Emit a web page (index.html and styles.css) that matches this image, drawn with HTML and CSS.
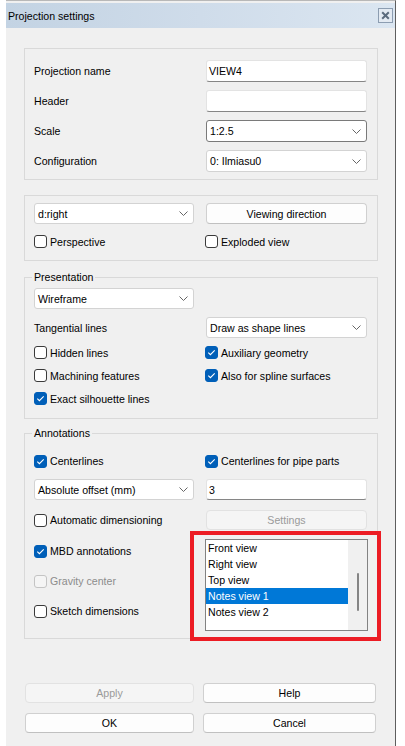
FILE: index.html
```html
<!DOCTYPE html>
<html>
<head>
<meta charset="utf-8">
<title>Projection settings</title>
<link rel="stylesheet" href="styles.css">
</head>
<body>
<div class="win">
  <div class="titlebar">
    <span class="title">Projection settings</span>
    <span class="close"><svg width="9" height="9" viewBox="0 0 9 9"><path d="M1.2 1.2L7.8 7.8M7.8 1.2L1.2 7.8" stroke="#5b6b7d" stroke-width="2"/></svg></span>
  </div>
  <div class="body">
    <div class="grp g1">
      <div class="row r22"><span>Projection name</span><div class="field tb">VIEW4</div></div>
      <div class="row r22"><span>Header</span><div class="field tb"></div></div>
      <div class="row r22"><span>Scale</span><div class="field combo focus"><span>1:2.5</span><svg class="chev" width="9" height="5" viewBox="0 0 9 5"><path d="M0.5 0.5L4.5 4.5L8.5 0.5" fill="none" stroke="#666"/></svg></div></div>
      <div class="row r22"><span>Configuration</span><div class="field combo"><span>0: Ilmiasu0</span><svg class="chev" width="9" height="5" viewBox="0 0 9 5"><path d="M0.5 0.5L4.5 4.5L8.5 0.5" fill="none" stroke="#666"/></svg></div></div>
    </div>

    <div class="grp g2">
      <div class="row r21">
        <div class="field combo"><span>d:right</span><svg class="chev" width="9" height="5" viewBox="0 0 9 5"><path d="M0.5 0.5L4.5 4.5L8.5 0.5" fill="none" stroke="#666"/></svg></div>
        <div class="btn">Viewing direction</div>
      </div>
      <div class="row r23 mt6">
        <label class="cb"><span class="box"></span>Perspective</label>
        <label class="cb rc"><span class="box"></span>Exploded view</label>
      </div>
    </div>

    <div class="grp g3">
      <div class="legend">Presentation</div>
      <div class="row r21 mt4">
        <div class="field combo"><span>Wireframe</span><svg class="chev" width="9" height="5" viewBox="0 0 9 5"><path d="M0.5 0.5L4.5 4.5L8.5 0.5" fill="none" stroke="#666"/></svg></div>
      </div>
      <div class="row r21 mt8">
        <span>Tangential lines</span>
        <div class="field combo"><span>Draw as shape lines</span><svg class="chev" width="9" height="5" viewBox="0 0 9 5"><path d="M0.5 0.5L4.5 4.5L8.5 0.5" fill="none" stroke="#666"/></svg></div>
      </div>
      <div class="row r23 mt3">
        <label class="cb"><span class="box"></span>Hidden lines</label>
        <label class="cb rc"><span class="box on"><svg width="13" height="13" viewBox="0 0 13 13"><path d="M3.3 6.6L5.4 8.7L9.7 4.4" fill="none" stroke="#fff" stroke-width="1.1"/></svg></span>Auxiliary geometry</label>
      </div>
      <div class="row r23">
        <label class="cb"><span class="box"></span>Machining features</label>
        <label class="cb rc"><span class="box on"><svg width="13" height="13" viewBox="0 0 13 13"><path d="M3.3 6.6L5.4 8.7L9.7 4.4" fill="none" stroke="#fff" stroke-width="1.1"/></svg></span>Also for spline surfaces</label>
      </div>
      <div class="row r23">
        <label class="cb"><span class="box on"><svg width="13" height="13" viewBox="0 0 13 13"><path d="M3.3 6.6L5.4 8.7L9.7 4.4" fill="none" stroke="#fff" stroke-width="1.1"/></svg></span>Exact silhouette lines</label>
      </div>
    </div>

    <div class="grp g4">
      <div class="legend">Annotations</div>
      <div class="row r22 mt10">
        <label class="cb"><span class="box on"><svg width="13" height="13" viewBox="0 0 13 13"><path d="M3.3 6.6L5.4 8.7L9.7 4.4" fill="none" stroke="#fff" stroke-width="1.1"/></svg></span>Centerlines</label>
        <label class="cb rc"><span class="box on"><svg width="13" height="13" viewBox="0 0 13 13"><path d="M3.3 6.6L5.4 8.7L9.7 4.4" fill="none" stroke="#fff" stroke-width="1.1"/></svg></span>Centerlines for pipe parts</label>
      </div>
      <div class="row r21 mt7">
        <div class="field combo"><span>Absolute offset (mm)</span><svg class="chev" width="9" height="5" viewBox="0 0 9 5"><path d="M0.5 0.5L4.5 4.5L8.5 0.5" fill="none" stroke="#666"/></svg></div>
        <div class="field tb">3</div>
      </div>
      <div class="row r20 mt10">
        <label class="cb"><span class="box"></span>Automatic dimensioning</label>
        <div class="btn dis">Settings</div>
      </div>
      <div class="split">
        <div class="lcol">
          <label class="cb r30"><span class="box on"><svg width="13" height="13" viewBox="0 0 13 13"><path d="M3.3 6.6L5.4 8.7L9.7 4.4" fill="none" stroke="#fff" stroke-width="1.1"/></svg></span>MBD annotations</label>
          <label class="cb r30 disabled"><span class="box"></span>Gravity center</label>
          <label class="cb r30"><span class="box"></span>Sketch dimensions</label>
        </div>
        <div class="listbox">
          <div class="items">
            <div class="item">Front view</div>
            <div class="item">Right view</div>
            <div class="item">Top view</div>
            <div class="item sel">Notes view 1</div>
            <div class="item">Notes view 2</div>
          </div>
          <div class="sb"><div class="thumb"></div></div>
          <div class="highlight"></div>
        </div>
      </div>
    </div>

    <div class="actions">
      <div class="btn dis">Apply</div>
      <div class="btn">Help</div>
      <div class="btn">OK</div>
      <div class="btn">Cancel</div>
    </div>
  </div>
</div>
</body>
</html>
```

FILE: styles.css
```css
* { box-sizing: border-box; }
html, body { margin: 0; padding: 0; background: #fff; }
body {
  font-family: "Liberation Sans", Arial, sans-serif;
  font-size: 10.6px;
  color: #000;
  overflow: hidden;
}
.win {
  margin-left: 6px;
  width: 390px;
  height: 746px;
  background: #f0f0f0;
  border-top: 1px solid #b8b8b8;
  border-right: 1px solid #5e5e5e;
  display: flex;
  flex-direction: column;
}
.titlebar {
  margin-top: 2px;
  height: 25px;
  background: linear-gradient(90deg, #c3d3e3 0%, #cfdcea 50%, #dbe6f1 100%);
  display: flex;
  align-items: center;
  justify-content: space-between;
  padding-left: 2px;
  padding-right: 2px;
}
.title { font-size: 10.6px; }
.close {
  width: 15px;
  height: 15px;
  border: 1px solid #8c9db1;
  background: #e3eaf2;
  display: flex;
  align-items: center;
  justify-content: center;
}
.body {
  flex: 1;
  padding: 20px 17px 0 18px;
}
.grp {
  border: 1px solid #d9d9d9;
  padding: 0 10px 0 9px;
}
.g1 { padding-top: 11px; padding-bottom: 7px; display: flex; flex-direction: column; gap: 8px; }
.g2 { margin-top: 15px; padding-top: 7px; padding-bottom: 7px; }
.g3 { margin-top: 16px; padding-bottom: 8px; }
.g4 { margin-top: 14px; padding-bottom: 7px; }
.legend {
  margin: -8px 0 0 -2px;
  padding: 0 2px;
  width: max-content;
  line-height: 14px;
  background: #f0f0f0;
}
.row {
  display: grid;
  grid-template-columns: 160px 161px;
  column-gap: 12px;
  align-items: center;
}
.r20 { height: 20px; }
.r21 { height: 21px; }
.r22 { height: 22px; }
.r23 { height: 23px; }
.r30 { height: 30px; }
.mt3 { margin-top: 3px; }
.mt4 { margin-top: 4px; }
.mt6 { margin-top: 6px; }
.mt7 { margin-top: 7px; }
.mt8 { margin-top: 8px; }
.mt10 { margin-top: 10px; }
.row > * { height: 100%; }
.row > span, .row > .cb { height: auto; }
.field {
  background: #fff;
  border: 1px solid #d3d3d3;
  border-radius: 3px;
  display: flex;
  align-items: center;
  padding: 0 5px 0 3px;
}
.tb {
  border-color: #e3e3e3;
  border-bottom-color: #868686;
  padding-left: 2px;
}
.combo { justify-content: space-between; }
.combo.focus { border-color: #7a7a7a; }
.chev { flex: none; }
.btn {
  background: #fdfdfd;
  border: 1px solid #d0d0d0;
  border-bottom-color: #c0c0c0;
  border-radius: 4px;
  display: flex;
  align-items: center;
  justify-content: center;
}
.btn.dis {
  background: #f5f5f5;
  border-color: #e2e2e2;
  color: #9a9a9a;
}
.cb {
  display: flex;
  align-items: center;
  white-space: nowrap;
}
.cb.rc { margin-left: -1px; }
.box {
  width: 13px;
  height: 13px;
  border: 1px solid #3a3a3a;
  border-radius: 3px;
  background: #fff;
  margin-right: 3px;
  flex: none;
  display: flex;
  align-items: center;
  justify-content: center;
}
.box svg { display: block; margin: -1px; }
.box.on { background: #005fb8; border-color: #005fb8; }
.cb.disabled { color: #8c8c8c; }
.cb.disabled .box { border-color: #c4c4c4; background: #f5f5f5; }
.split {
  margin-top: 6px;
  display: grid;
  grid-template-columns: 160px 161px;
  column-gap: 12px;
  align-items: start;
}
.lcol { display: flex; flex-direction: column; }
.listbox {
  position: relative;
  margin-top: 3px;
  margin-left: -1px;
  width: 163px;
  height: 92px;
  border: 1px solid #828282;
  background: #fff;
  display: flex;
}
.items { width: 142px; }
.item {
  height: 16px;
  line-height: 16px;
  padding-left: 2px;
  white-space: nowrap;
}
.item.sel { background: #0078d7; color: #fff; }
.sb {
  flex: 1;
  background: #f0f0f0;
  padding-top: 33px;
  display: flex;
  justify-content: center;
}
.thumb {
  width: 2px;
  height: 38px;
  background: #858585;
  border-radius: 1px;
}
.highlight {
  position: absolute;
  left: -16px;
  top: -9px;
  right: -14px;
  bottom: -11px;
  border: 4px solid #ec1c24;
  pointer-events: none;
}
.actions {
  margin-top: 44px;
  margin-left: 1px;
  display: grid;
  grid-template-columns: 169px 173px;
  column-gap: 9px;
  row-gap: 10px;
}
.actions .btn { height: 20px; }
```
